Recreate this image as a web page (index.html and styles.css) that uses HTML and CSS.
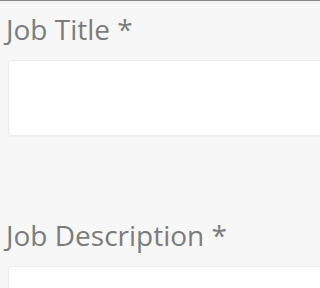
FILE: index.html
```html
<!DOCTYPE html>
<html>
<head>
<meta charset="utf-8">
<link rel="stylesheet" href="styles.css">
</head>
<body>
<div class="topbar"></div>
<form class="form">
  <div class="field">
    <label class="label" for="title">Job Title *</label>
    <input class="text-input" id="title" type="text">
  </div>
  <div class="field">
    <label class="label" for="desc">Job Description *</label>
    <textarea class="text-input" id="desc"></textarea>
  </div>
</form>
</body>
</html>
```
FILE: styles.css
```css
html, body {
  margin: 0;
  padding: 0;
  background: #f7f7f7;
  height: 100%;
  overflow: hidden;
}
.topbar {
  height: 3px;
  border-top: 1px solid #8a8a8a;
  border-bottom: 1px solid #fdfdfd;
  background: #f4f4f4;
}
.form {
  margin: 0;
  padding: 5px 0 0 8px;
  display: flex;
  flex-direction: column;
  gap: 80px;
  overflow: hidden;
}
.field {
  display: flex;
  flex-direction: column;
  gap: 12px;
}
.label {
  font-family: "Open Sans", sans-serif;
  font-size: 28px;
  line-height: 38px;
  color: #7c7c7c;
  margin-left: -2px;
}
.text-input {
  display: block;
  box-sizing: border-box;
  width: calc(100% + 6px);
  height: 76px;
  margin: 0;
  padding: 0;
  background: #ffffff;
  border: 1px solid #ededed;
  border-radius: 3px;
  box-shadow: 0 1px 1px rgba(0,0,0,0.03);
  resize: none;
  outline: none;
}
```
